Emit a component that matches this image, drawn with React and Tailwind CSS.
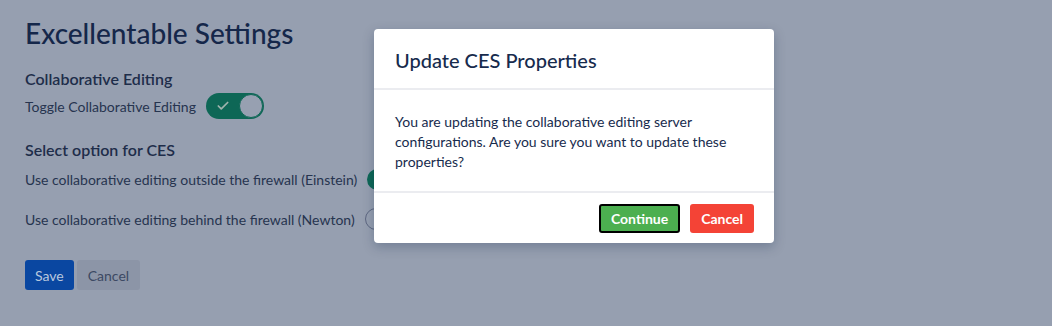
import { Check } from 'lucide-react'

function Toggle() {
  return (
    <div className="ml-[10px] flex h-[26px] w-[58px] items-center rounded-full bg-[#0e6756] p-[2px]">
      <div className="flex flex-1 items-center justify-center">
        <Check className="h-[14px] w-[14px] text-[#9fb3ad]" strokeWidth={3} />
      </div>
      <div className="h-[24px] w-[24px] rounded-full border border-[#0e6756] bg-[#97a0b1] -mr-[1px]" />
    </div>
  )
}

export default function App() {
  return (
    <div className="relative h-[326px] w-[1052px] overflow-hidden bg-[#969fb0] text-[#172b4d] font-['Lato',sans-serif]">
      <div className="px-[25px] pt-[14px]">
        <h1 className="text-[28px] font-medium leading-[38px] text-[#15274a]">Excellentable Settings</h1>

        <h2 className="mt-[16px] text-[16px] font-semibold leading-[22px] text-[#1e2d4a]">Collaborative Editing</h2>
        <div className="mt-[3px] flex items-center text-[14px] text-[#26344f]">
          <span>Toggle Collaborative Editing</span>
          <Toggle />
        </div>

        <h2 className="mt-[20px] text-[16px] font-semibold leading-[22px] text-[#1e2d4a]">Select option for CES</h2>
        <div className="mt-[6px] flex h-[24px] items-center text-[14px] text-[#26344f]">
          <span>Use collaborative editing outside the firewall (Einstein)</span>
          <div className="ml-[10px] h-[21px] w-[21px] rounded-full bg-[#0e6756]" />
        </div>
        <div className="mt-[16px] flex h-[24px] items-center text-[14px] text-[#26344f]">
          <span>Use collaborative editing behind the firewall (Newton)</span>
          <div className="ml-[10px] h-[22px] w-[22px] rounded-full border border-[#5d6781]" />
        </div>

        <div className="mt-[29px] flex gap-[3px] text-[14px]">
          <button className="h-[30px] rounded-[3px] bg-[#0a47a1] px-[10px] text-[#b9c7de]">Save</button>
          <button className="h-[30px] rounded-[3px] bg-[#8c95a7] px-[11px] text-[#3c4963]">Cancel</button>
        </div>
      </div>

      <div className="absolute left-[374px] top-[29px] w-[400px] rounded-[4px] bg-white shadow-[0_4px_12px_rgba(9,30,66,0.25)]">
        <div className="flex h-[61px] items-center border-b-2 border-[#ebecf0] px-[21px] pt-[2px]">
          <h3 className="text-[20px] font-medium text-[#172b4d]">Update CES Properties</h3>
        </div>
        <div className="border-b-2 border-[#ebecf0] px-[21px] pb-[19px] pt-[22px] text-[14px] leading-[20px] text-[#172b4d]">
          You are updating the collaborative editing server configurations. Are you sure you want to update these properties?
        </div>
        <div className="flex justify-end gap-[10px] px-[20px] pb-[10px] pt-[11px]">
          <button className="h-[29px] rounded-[3px] border-2 border-black bg-[#4caf50] px-[10px] text-[14px] font-bold text-white">Continue</button>
          <button className="h-[29px] rounded-[3px] bg-[#f44336] px-[11px] text-[14px] font-bold text-white">Cancel</button>
        </div>
      </div>
    </div>
  )
}
